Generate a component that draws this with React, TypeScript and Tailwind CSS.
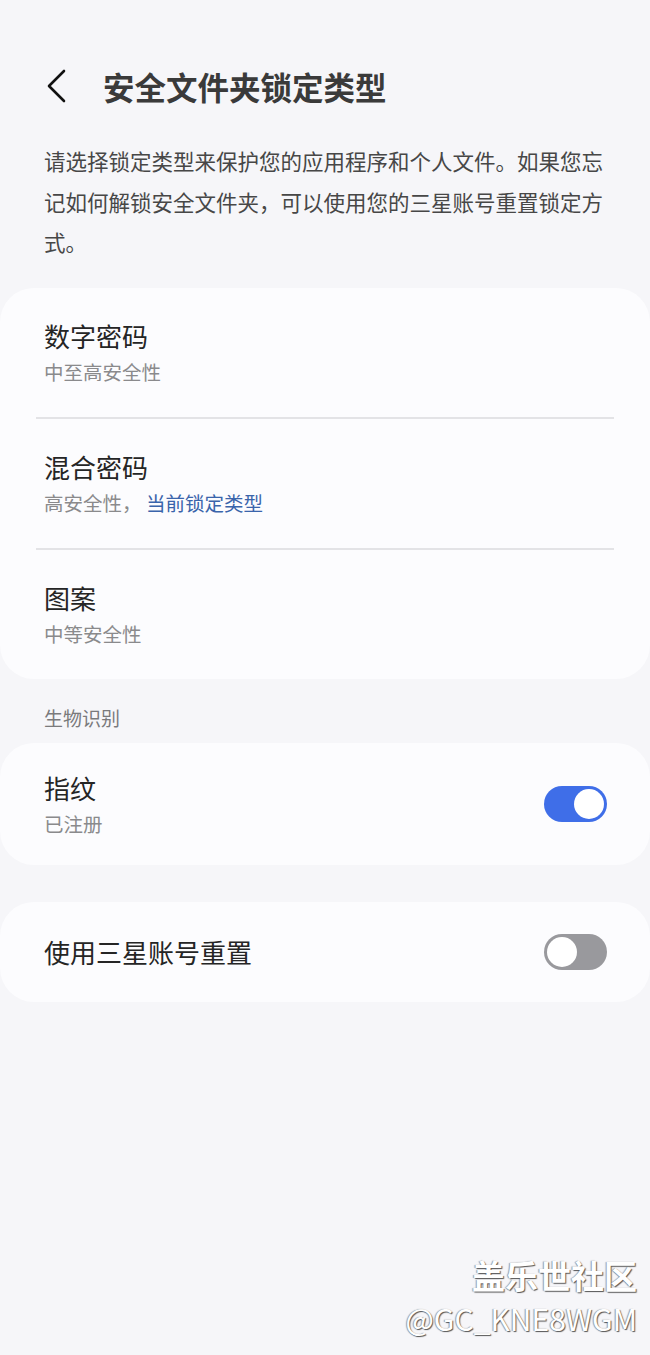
const font = { fontFamily: '"Noto Sans CJK SC", "Noto Sans", sans-serif' };

function Toggle({ on }: { on: boolean }) {
  return (
    <div
      className={`flex h-[36px] w-[63px] items-center rounded-full p-[3px] ${
        on ? "justify-end bg-[#3f6ee8]" : "justify-start bg-[#99999d]"
      }`}
    >
      <div className="h-[30px] w-[30px] rounded-full bg-white" />
    </div>
  );
}

function Row({ title, sub }: { title: string; sub: React.ReactNode }) {
  return (
    <div className="flex h-[129px] flex-col justify-center px-[44px]">
      <div className="text-[26px] leading-[34px] text-[#252525]">{title}</div>
      <div className="mt-[6px] text-[19.5px] leading-[26px] text-[#8a8a8c]">{sub}</div>
    </div>
  );
}

export default function App() {
  return (
    <div className="relative flex h-[1355px] w-[650px] flex-col overflow-hidden bg-[#f6f6f9] pt-[58px]" style={font}>
      {/* header */}
      <div className="flex h-[56px] items-center">
        <svg className="ml-[45px]" width="22" height="34" viewBox="0 0 22 34" fill="none">
          <path d="M19 2 L4 17 L19 32" stroke="#111" strokeWidth="2.6" strokeLinecap="round" strokeLinejoin="round" />
        </svg>
        <h1 className="ml-[36px] text-[31.5px] font-bold leading-[40px] text-[#3a3a3a]">安全文件夹锁定类型</h1>
      </div>

      <p className="mx-[44px] mt-[27px] w-[564px] text-[21.5px] leading-[40.5px] text-[#474747]">
        请选择锁定类型来保护您的应用程序和个人文件。如果您忘记如何解锁安全文件夹，可以使用您的三星账号重置锁定方式。
      </p>

      {/* lock types */}
      <div className="mt-[25px] rounded-[34px] bg-[#fcfcfe]">
        <Row title="数字密码" sub="中至高安全性" />
        <div className="mx-[36px] h-[2px] bg-[#e3e3e6]" />
        <Row
          title="混合密码"
          sub={
            <>
              高安全性，&nbsp;<span className="text-[#3a64ab]">当前锁定类型</span>
            </>
          }
        />
        <div className="mx-[36px] h-[2px] bg-[#e3e3e6]" />
        <Row title="图案" sub="中等安全性" />
      </div>

      <div className="ml-[44px] mt-[26px] text-[19px] leading-[26px] text-[#7a7a7c]">生物识别</div>

      <div className="mt-[12px] flex h-[122px] items-center justify-between rounded-[34px] bg-[#fcfcfe] pr-[43px]">
        <div className="px-[44px]">
          <div className="text-[26px] leading-[34px] text-[#252525]">指纹</div>
          <div className="mt-[6px] text-[19.5px] leading-[26px] text-[#8a8a8c]">已注册</div>
        </div>
        <Toggle on />
      </div>

      <div className="mt-[37px] flex h-[100px] items-center justify-between rounded-[34px] bg-[#fcfcfe] pr-[43px]">
        <div className="px-[44px] text-[26px] leading-[34px] text-[#252525]">使用三星账号重置</div>
        <Toggle on={false} />
      </div>

      {/* watermark */}
      <div className="absolute bottom-[16px] right-[13px] text-right">
        <div
          className="text-[33px] font-bold leading-[44px] text-white"
          style={{ textShadow: "1px 1px 1px #555, -1px 0 1px #999" }}
        >
          盖乐世社区
        </div>
        <div
          className="text-[30px] leading-[42px] text-white"
          style={{ textShadow: "1px 1px 1px #555, -1px 0 1px #999" }}
        >
          @GC_KNE8WGM
        </div>
      </div>
    </div>
  );
}
